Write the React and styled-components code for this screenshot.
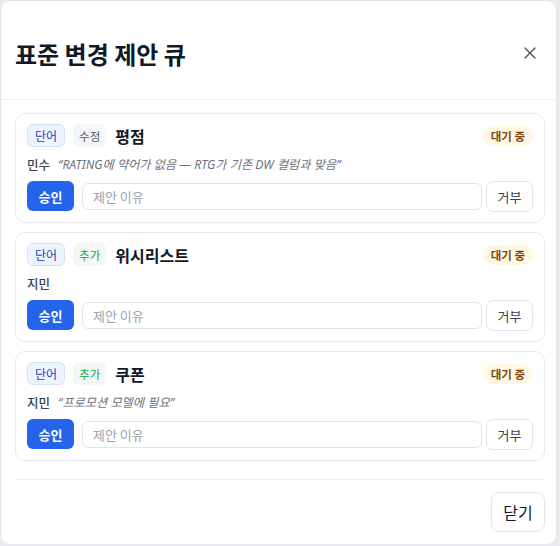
import React from "react";
import styled, { createGlobalStyle } from "styled-components";
import { X } from "lucide-react";

const Global = createGlobalStyle`
  html, body { margin: 0; padding: 0; background: #e9ebee; }
  body { font-family: "Noto Sans", "Noto Sans CJK KR", sans-serif; }
  * { box-sizing: border-box; }
`;

const Panel = styled.div`
  width: 557px;
  height: 545px;
  background: #fff;
  border: 1px solid #e3e5e9;
  border-radius: 10px;
  display: flex;
  flex-direction: column;
  overflow: hidden;
`;

const Header = styled.div`
  height: 99px;
  flex-shrink: 0;
  display: flex;
  align-items: center;
  justify-content: space-between;
  padding: 7px 12px 0 14px;
  border-bottom: 1px solid #eceef1;
`;

const Title = styled.h1`
  margin: 0;
  font-size: 24px;
  font-weight: 700;
  color: #111827;
  line-height: 1.3;
  font-family: "Noto Sans CJK KR", sans-serif;
`;

const IconButton = styled.button`
  width: 28px;
  height: 28px;
  border: none;
  background: transparent;
  display: flex;
  align-items: center;
  justify-content: center;
  color: #4b5563;
  padding: 0;
  margin-top: -2px;
`;

const Body = styled.div`
  flex: 1;
  padding: 13px 11px 17px 14px;
  display: flex;
  flex-direction: column;
  gap: 9px;
`;

const Card = styled.div`
  height: 110px;
  border: 1px solid #e8eaee;
  border-radius: 10px;
  padding: 10px 11px 11px 11px;
  display: flex;
  flex-direction: column;
  gap: 8px;
`;

const TopRow = styled.div`
  height: 23px;
  display: flex;
  align-items: center;
  gap: 8px;
`;

const Chip = styled.span`
  height: 23px;
  display: inline-flex;
  align-items: center;
  padding: 0 ${(p) => (p.$kind === "type" ? "7px" : "5px")};
  border-radius: 6px;
  font-family: "Noto Sans CJK KR", sans-serif;
  font-size: ${(p) => (p.$kind === "type" ? "12px" : "11.5px")};
  font-weight: 400;
  color: ${(p) =>
    p.$kind === "type" ? "#1e40af" : p.$kind === "add" ? "#16a34a" : "#4b5563"};
  background: ${(p) =>
    p.$kind === "type" ? "#eef4ff" : p.$kind === "add" ? "#f4f7f5" : "#f5f6f8"};
  border: 1px solid ${(p) => (p.$kind === "type" ? "#d3e0fb" : "transparent")};
`;

const Term = styled.span`
  margin-left: 1px;
  font-family: "Noto Sans CJK KR", sans-serif;
  font-size: 16px;
  font-weight: 700;
  color: #111827;
  flex: 1;
`;

const Status = styled.span`
  height: 20px;
  display: inline-flex;
  align-items: center;
  padding: 0 8px;
  border-radius: 999px;
  background: #fef7e2;
  color: #7c4a10;
  font-family: "Noto Sans CJK KR", sans-serif;
  font-size: 11.5px;
  font-weight: 700;
`;

const Meta = styled.div`
  height: 18px;
  display: flex;
  align-items: center;
  gap: 8px;
  font-size: 12.5px;
`;

const Author = styled.span`
  color: #374151;
  font-weight: 500;
  font-family: "Noto Sans CJK KR", sans-serif;
`;

const Quote = styled.span`
  color: #6b7280;
  font-style: italic;
  font-size: 12.2px;
`;

const Actions = styled.div`
  height: 30px;
  display: flex;
  align-items: center;
  gap: 8px;
`;

const Approve = styled.button`
  width: 47px;
  height: 30px;
  border: none;
  border-radius: 6px;
  background: #2563eb;
  color: #fff;
  font-family: "Noto Sans CJK KR", sans-serif;
  font-size: 13px;
  font-weight: 700;
  padding: 0;
`;

const Reason = styled.input`
  flex: 1;
  height: 27px;
  margin-right: -4px;
  border: 1px solid #e3e5ea;
  border-radius: 6px;
  padding: 0 10px;
  font-family: "Noto Sans CJK KR", sans-serif;
  font-size: 13px;
  color: #111827;
  outline: none;
  &::placeholder { color: #9ca3af; }
`;

const Reject = styled.button`
  width: 47px;
  height: 31px;
  border: 1px solid #e3e5ea;
  border-radius: 7px;
  background: #fff;
  color: #374151;
  font-family: "Noto Sans CJK KR", sans-serif;
  font-size: 13px;
  padding: 0;
`;

const Footer = styled.div`
  margin: 0 11px 0 14px;
  border-top: 1px solid #eceef1;
  padding: 12px 0 12px;
  display: flex;
  justify-content: flex-end;
`;

const CloseButton = styled.button`
  width: 54px;
  height: 40px;
  border: 1px solid #e3e5ea;
  border-radius: 8px;
  background: #fff;
  color: #111827;
  font-family: "Noto Sans CJK KR", sans-serif;
  font-size: 16px;
  padding: 0;
`;

const proposals = [
  { action: "수정", kind: "edit", term: "평점", author: "민수", reason: "RATING에 약어가 없음 — RTG가 기존 DW 컬럼과 맞음" },
  { action: "추가", kind: "add", term: "위시리스트", author: "지민", reason: "" },
  { action: "추가", kind: "add", term: "쿠폰", author: "지민", reason: "프로모션 모델에 필요" },
];

export default function App() {
  return (
    <>
      <Global />
      <Panel>
        <Header>
          <Title>표준 변경 제안 큐</Title>
          <IconButton aria-label="닫기">
            <X size={20} strokeWidth={1.6} />
          </IconButton>
        </Header>
        <Body>
          {proposals.map((p, i) => (
            <Card key={i}>
              <TopRow>
                <Chip $kind="type">단어</Chip>
                <Chip $kind={p.kind}>{p.action}</Chip>
                <Term>{p.term}</Term>
                <Status>대기 중</Status>
              </TopRow>
              <Meta>
                <Author>{p.author}</Author>
                {p.reason && <Quote>“{p.reason}”</Quote>}
              </Meta>
              <Actions>
                <Approve>승인</Approve>
                <Reason placeholder="제안 이유" />
                <Reject>거부</Reject>
              </Actions>
            </Card>
          ))}
        </Body>
        <Footer>
          <CloseButton>닫기</CloseButton>
        </Footer>
      </Panel>
    </>
  );
}
